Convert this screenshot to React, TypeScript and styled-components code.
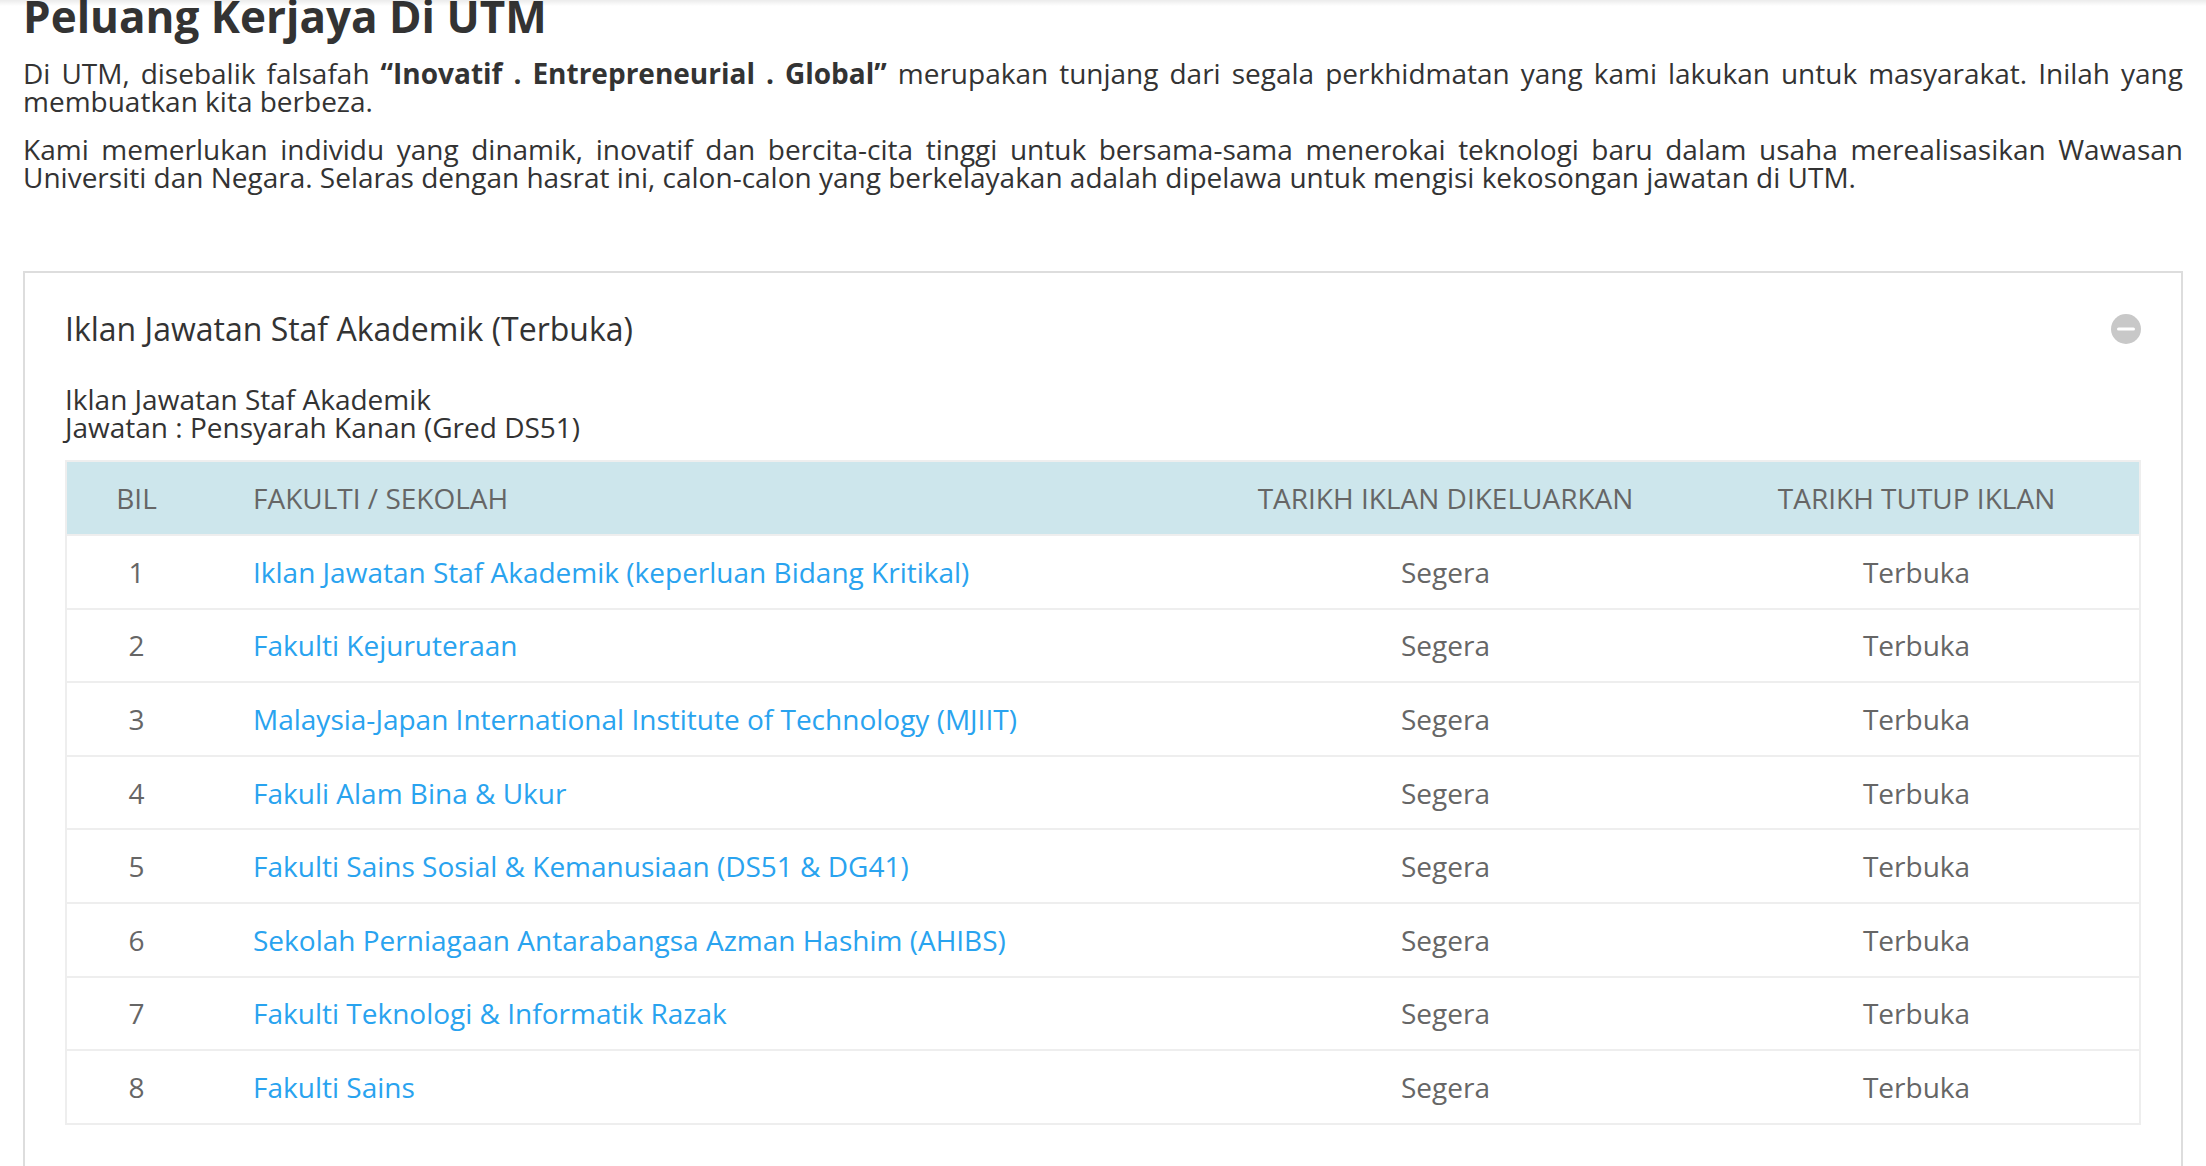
import React from "react";
import styled, { createGlobalStyle } from "styled-components";

const GlobalStyle = createGlobalStyle`
  html, body {
    margin: 0;
    padding: 0;
    background: #fff;
    height: 100%;
    overflow: hidden;
  }
  body {
    font-family: "Open Sans", "Noto Sans", sans-serif;
    color: #333;
  }
`;

const Page = styled.div`
  position: relative;
  width: 2206px;
  height: 1166px;
  overflow: hidden;
  padding: 0 23px;
  box-sizing: border-box;
`;

const TopShadow = styled.div`
  position: absolute;
  top: 0;
  left: 0;
  right: 0;
  height: 6px;
  background: linear-gradient(180deg, rgba(0, 0, 0, 0.08), rgba(0, 0, 0, 0));
`;

const Title = styled.h1`
  margin: -14px 0 13px;
  font-size: 44px;
  line-height: 60px;
  font-weight: 700;
  color: #333;
`;

const Intro = styled.p`
  margin: 0 0 20px;
  font-size: 28px;
  line-height: 28px;
  text-align: justify;
  color: #333;
`;

const Panel = styled.section`
  margin-top: 80px;
  border: 2px solid #ddd;
  padding: 0 40px;
  height: 1000px;
  box-sizing: border-box;
`;

const PanelHead = styled.div`
  display: flex;
  align-items: center;
  justify-content: space-between;
  height: 111px;
`;

const PanelTitle = styled.h2`
  margin: 0;
  font-size: 32px;
  font-weight: 400;
  color: #333;
`;

const CollapseBtn = styled.span`
  display: flex;
  align-items: center;
  justify-content: center;
  width: 30px;
  height: 30px;
  border-radius: 50%;
  background: #c8c8c8;
`;

const Lead = styled.div`
  margin-top: 1px;
  font-size: 28px;
  line-height: 28px;
  color: #333;
`;

const Table = styled.table`
  width: 2074px;
  margin-top: 19px;
  border-collapse: collapse;
  table-layout: fixed;
  font-size: 28px;
  color: #666;
`;

const HeadRow = styled.tr`
  background: #cde6ec;
`;

const Th = styled.th<{ $left?: boolean }>`
  height: 72px;
  padding: 0;
  border: 2px solid #eee;
  border-width: 2px 0;
  font-weight: 400;
  text-align: ${(p) => (p.$left ? "left" : "center")};
  padding-left: ${(p) => (p.$left ? "47px" : "0")};
  &:first-child { border-left-width: 2px; }
  &:last-child { border-right-width: 2px; }
`;

const Td = styled.td<{ $left?: boolean }>`
  height: 71.6px;
  padding: 0;
  border-bottom: 2px solid #eee;
  text-align: ${(p) => (p.$left ? "left" : "center")};
  padding-left: ${(p) => (p.$left ? "47px" : "0")};
  &:first-child { border-left: 2px solid #eee; }
  &:last-child { border-right: 2px solid #eee; }
`;

const FacultyLink = styled.a`
  color: #29a3ef;
  text-decoration: none;
`;

const faculties = [
  "Iklan Jawatan Staf Akademik (keperluan Bidang Kritikal)",
  "Fakulti Kejuruteraan",
  "Malaysia-Japan International Institute of Technology (MJIIT)",
  "Fakuli Alam Bina & Ukur",
  "Fakulti Sains Sosial & Kemanusiaan (DS51 & DG41)",
  "Sekolah Perniagaan Antarabangsa Azman Hashim (AHIBS)",
  "Fakulti Teknologi & Informatik Razak",
  "Fakulti Sains",
];

export default function App() {
  return (
    <Page>
      <GlobalStyle />
      <TopShadow />
      <Title>Peluang Kerjaya Di UTM</Title>
      <Intro>
        Di UTM, disebalik falsafah <strong>“Inovatif . Entrepreneurial . Global”</strong> merupakan
        tunjang dari segala perkhidmatan yang kami lakukan untuk masyarakat. Inilah yang membuatkan
        kita berbeza.
      </Intro>
      <Intro>
        Kami memerlukan individu yang dinamik, inovatif dan bercita-cita tinggi untuk bersama-sama
        menerokai teknologi baru dalam usaha merealisasikan Wawasan Universiti dan Negara. Selaras
        dengan hasrat ini, calon-calon yang berkelayakan adalah dipelawa untuk mengisi kekosongan
        jawatan di UTM.
      </Intro>

      <Panel>
        <PanelHead>
          <PanelTitle>Iklan Jawatan Staf Akademik (Terbuka)</PanelTitle>
          <CollapseBtn>
            <svg width="18" height="4" viewBox="0 0 18 4">
              <rect x="0" y="0.5" width="18" height="3" rx="1.5" fill="#fff" />
            </svg>
          </CollapseBtn>
        </PanelHead>
        <Lead>
          Iklan Jawatan Staf Akademik
          <br />
          Jawatan : Pensyarah Kanan (Gred DS51)
        </Lead>
        <Table>
          <colgroup>
            <col width="140" />
            <col width="991" />
            <col width="497" />
            <col width="446" />
          </colgroup>
          <thead>
            <HeadRow>
              <Th>BIL</Th>
              <Th $left>FAKULTI / SEKOLAH</Th>
              <Th>TARIKH IKLAN DIKELUARKAN</Th>
              <Th>TARIKH TUTUP IKLAN</Th>
            </HeadRow>
          </thead>
          <tbody>
            {faculties.map((name, i) => (
              <tr key={name}>
                <Td>{i + 1}</Td>
                <Td $left>
                  <FacultyLink href="#">{name}</FacultyLink>
                </Td>
                <Td>Segera</Td>
                <Td>Terbuka</Td>
              </tr>
            ))}
          </tbody>
        </Table>
      </Panel>
    </Page>
  );
}
